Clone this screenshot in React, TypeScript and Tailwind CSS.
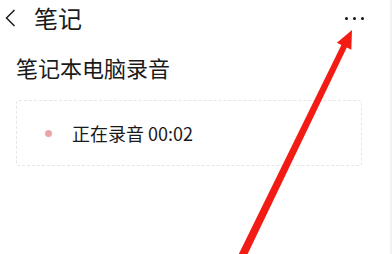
export default function App(): JSX.Element {
  return (
    <div
      className="relative h-[254px] w-[392px] overflow-hidden border-r-2 border-[#f2f2f2] bg-white text-[#1a1a1a]"
      style={{ fontFamily: '"Noto Sans CJK SC", "Noto Sans", sans-serif' }}
    >
      {/* header */}
      <div className="flex h-[36px] items-center pr-[26px]">
        <svg viewBox="0 0 12 18" className="ml-[4px] h-[18px] w-[12px]" fill="none">
          <path d="M10.5 1L2.5 9L10.5 17" stroke="#1a1a1a" strokeWidth="1.5" />
        </svg>
        <span className="ml-[18px] text-[24px] leading-none">笔记</span>
        <div className="ml-auto flex items-center gap-[5px]">
          <span className="size-[3px] rounded-full bg-[#111]" />
          <span className="size-[3px] rounded-full bg-[#111]" />
          <span className="size-[3px] rounded-full bg-[#111]" />
        </div>
      </div>

      {/* note title */}
      <div className="mt-[20px] pl-[16px] text-[22px] leading-none">笔记本电脑录音</div>

      {/* recording card */}
      <div className="ml-[16px] mt-[22px] flex h-[66px] w-[346px] items-center rounded-[3px] border border-dashed border-[#e6e6e6] pl-[28px]">
        <span className="size-[7px] rounded-full bg-[#eaa6a6]" />
        <span className="ml-[20px] text-[18px] leading-none">正在录音 00:02</span>
      </div>

      {/* annotation arrow */}
      <svg className="pointer-events-none absolute left-0 top-0" width="392" height="254" viewBox="0 0 392 254">
        <polygon
          points="352,30 351.3,49.7 346.8,47.5 245.7,258 238.3,255 341.4,44.9 336.9,42.7"
          fill="#f21c14"
        />
      </svg>
    </div>
  )
}
